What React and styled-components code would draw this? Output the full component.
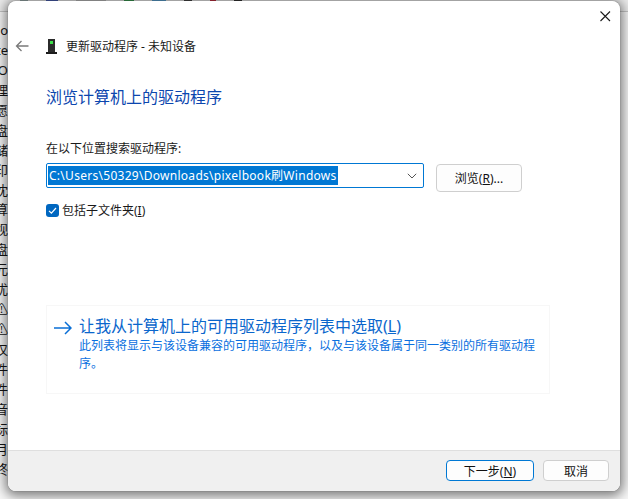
import React from 'react';
import styled, { createGlobalStyle } from 'styled-components';

const Global = createGlobalStyle`
  html, body { margin: 0; padding: 0; background: #f6f6f6; }
  #root { width: 628px; height: 499px; overflow: hidden; }
`;
const FONT = `"Noto Sans", "Noto Sans CJK SC", sans-serif`;
const Desktop = styled.div`
  position: relative; width: 628px; height: 499px; overflow: hidden; background: #f7f7f7;
  font-family: ${FONT};
`;
const TopStrip = styled.div`
  display: flex; height: 11px; border-bottom: 1px solid #c4c4c4; background: #ececec; padding-left: 20px; gap: 18px;
`;
const Chip = styled.span`
  width: ${p => p.$w}px; height: 2px; background: ${p => p.$c};
`;
const SideList = styled.ul`
  list-style: none; margin: 8px 0 0; padding: 0; width: 8px; overflow: hidden;
`;
const SideItem = styled.li`
  height: 19.95px; line-height: 20px; font-size: 13px; color: #141414; white-space: nowrap;
  direction: rtl; text-align: right; overflow: hidden; width: 8px;
`;
const Win = styled.div`
  position: absolute; left: 8px; top: 1px; width: 612px; height: 490px;
  display: flex; flex-direction: column; background: #fff; border-radius: 8px; overflow: hidden;
`;
const WinShadow = styled.div`
  position: absolute; left: 8px; top: 1px; width: 612px; height: 490px; border-radius: 8px;
  box-shadow: 0 2px 12px 3px rgba(0,0,0,.5), 0 0 1px rgba(0,0,0,.6);
`;
const TopBar = styled.div`
  display: flex; justify-content: flex-end; align-items: center; height: 30px; padding-right: 8px;
`;
const CloseBtn = styled.button`
  display: flex; border: 0; background: none; padding: 0; width: 14px; height: 14px;
`;
const Header = styled.div`
  display: flex; align-items: center; height: 30px; padding-left: 7px;
`;
const HeaderTitle = styled.span`
  font-size: 12px; color: #1a1a1a; margin-left: 9px; white-space: pre;
`;
const BackIcon = styled.svg`
  width: 14px; height: 12px; margin-right: 17px;
`;
const Content = styled.div`
  flex: 1; display: flex; flex-direction: column; padding: 25px 0 0 38px;
`;
const Heading = styled.h1`
  margin: 0; font-size: 16px; line-height: 22px; font-weight: 400; color: #0b46ae;
`;
const FieldLabel = styled.label`
  margin-top: 32px; font-size: 12px; line-height: 17px; color: #1a1a1a;
`;
const FieldRow = styled.div`
  display: flex; align-items: flex-start; margin-top: 6px;
`;
const Combo = styled.div`
  box-sizing: border-box; width: 378px; height: 25px; display: flex; align-items: center; justify-content: space-between;
  border: 1px solid #0078d4; border-radius: 2px; padding: 0 6px 0 1px; background: #fff;
`;
const Selected = styled.span`
  background: #0078d4; color: #fff; font-size: 12px; line-height: 19px; height: 19px; padding: 0 1px; white-space: nowrap;
  letter-spacing: .28px;
`;
const PushButton = styled.button`
  box-sizing: border-box; font-family: ${FONT}; font-size: 12px; color: #111; background: #fdfdfd;
  width: ${p => p.$w}px; height: ${p => p.$h}px; padding: 0;
  border: 1px solid ${p => p.$primary ? '#0078d4' : '#cfcfcf'}; border-radius: 4px;
  u { text-underline-offset: 1px; }
`;
const BrowseButton = styled(PushButton)`
  margin-left: 12px; margin-top: 1px;
`;
const CheckRow = styled.div`
  display: flex; align-items: center; margin-top: 11px; height: 14px; gap: 3px;
`;
const CheckBox = styled.span`
  display: flex; align-items: center; justify-content: center; width: 13px; height: 13px; border-radius: 3px; background: #0067c0;
`;
const CheckLabel = styled.span`
  font-size: 12px; color: #1a1a1a;
`;
const CommandLink = styled.div`
  box-sizing: border-box; width: 504px; height: 89px; margin-top: 88px; border: 1px solid #f7f7f7;
  display: flex; padding: 10px 0 0 7px; gap: 7px;
`;
const LinkArrow = styled.svg`
  width: 18px; height: 14px; margin-top: 5px; flex: none;
`;
const LinkText = styled.div`
  width: 488px;
`;
const LinkTitle = styled.div`
  font-size: 16px; line-height: 20px; color: #0a66cc;
`;
const LinkDesc = styled.div`
  font-size: 12px; line-height: 18px; color: #0a70e0; width: 468px; margin-top: 1px;
`;
const Footer = styled.div`
  box-sizing: border-box; height: 41px; background: #f0f0f0; border-top: 1px solid #dfdfdf;
  display: flex; justify-content: flex-end; align-items: flex-start; gap: 9px; padding: 9px 11px 0 0;
`;

const sideItems = ['ho','te','O','理','愿','盘','储','印','沈','算','视','盘','元','优','⚠','⚠','仅','件','件','音','标','月','终'];

export default function App() {
  return (
    <Desktop>
      <Global />
      <TopStrip>
        <Chip $w={8} $c="#9aa" /><Chip $w={12} $c="#4a5fb0" /><Chip $w={30} $c="#bbb" /><Chip $w={10} $c="#3a9a50" /><Chip $w={14} $c="#5aa0d0" /><Chip $w={8} $c="#444" /><Chip $w={6} $c="#c03040" /><Chip $w={8} $c="#333" />
      </TopStrip>
      <SideList>
        {sideItems.map((t, i) => <SideItem key={i}>{t}</SideItem>)}
      </SideList>
      <WinShadow />
      <Win>
        <TopBar>
          <CloseBtn aria-label="关闭">
            <svg width="14" height="14" viewBox="0 0 14 14"><path d="M2.5 2.5l9.5 9.5M12 2.5L2.5 12" stroke="#1a1a1a" strokeWidth="1.1" fill="none" /></svg>
          </CloseBtn>
        </TopBar>
        <Header>
          <BackIcon viewBox="0 0 14 12"><path d="M13.5 6H1.5M6.5 1L1.5 6l5 5" stroke="#7a7a7a" strokeWidth="1.3" fill="none" /></BackIcon>
          <svg width="11" height="15" viewBox="0 0 11 15">
            <rect x="2" y="0" width="7" height="13" fill="#2b2b2b" />
            <rect x="0" y="13" width="11" height="2" fill="#1c1c1c" />
            <rect x="4" y="2" width="3" height="3" fill="#3ce04a" />
          </svg>
          <HeaderTitle>更新驱动程序 - 未知设备</HeaderTitle>
        </Header>
        <Content>
          <Heading>浏览计算机上的驱动程序</Heading>
          <FieldLabel>在以下位置搜索驱动程序:</FieldLabel>
          <FieldRow>
            <Combo>
              <Selected>C:\Users\50329\Downloads\pixelbook刷Windows</Selected>
              <svg width="10" height="6" viewBox="0 0 10 6"><path d="M.8.8L5 5l4.2-4.2" stroke="#555" strokeWidth="1" fill="none" /></svg>
            </Combo>
            <BrowseButton $w={86} $h={28}>浏览(<u>R</u>)...</BrowseButton>
          </FieldRow>
          <CheckRow>
            <CheckBox>
              <svg width="11" height="11" viewBox="0 0 11 11"><path d="M2 5.8l2.4 2.4L9 3" stroke="#fff" strokeWidth="1.2" fill="none" /></svg>
            </CheckBox>
            <CheckLabel>包括子文件夹(<u>I</u>)</CheckLabel>
          </CheckRow>
          <CommandLink>
            <LinkArrow viewBox="0 0 18 14"><path d="M0 7h17M11 1l6 6-6 6" stroke="#0a6fd6" strokeWidth="1.5" fill="none" /></LinkArrow>
            <LinkText>
              <LinkTitle>让我从计算机上的可用驱动程序列表中选取(<u>L</u>)</LinkTitle>
              <LinkDesc>此列表将显示与该设备兼容的可用驱动程序，以及与该设备属于同一类别的所有驱动程序。</LinkDesc>
            </LinkText>
          </CommandLink>
        </Content>
        <Footer>
          <PushButton $primary $w={88} $h={21}>下一步(<u>N</u>)</PushButton>
          <PushButton $w={66} $h={21}>取消</PushButton>
        </Footer>
      </Win>
    </Desktop>
  );
}
